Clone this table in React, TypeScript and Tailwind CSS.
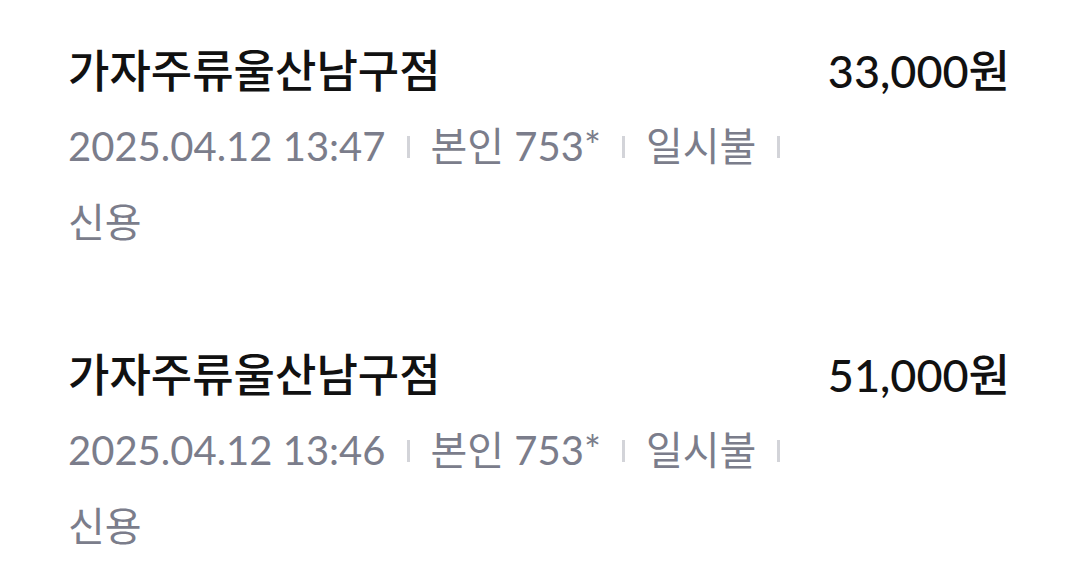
import React from "react";

const items = [
  { date: "2025.04.12 13:47", price: "33,000원" },
  { date: "2025.04.12 13:46", price: "51,000원" },
];

function Sep() {
  return <span className="mx-[21px] inline-block h-[22px] w-[3px] bg-[#d3d4d9]" />;
}

export default function App() {
  return (
    <div
      className="min-h-screen w-full bg-white pt-[45px] pl-[68px] pr-[70px]"
      style={{ fontFamily: "Lato, 'Noto Sans CJK KR', sans-serif" }}
    >
      {items.map((it, i) => (
        <div key={i} className={i > 0 ? "mt-[90px]" : ""}>
          <div className="flex items-center justify-between gap-6">
            <div className="text-[45px] leading-[52px] font-medium text-[#111111]">가자주류울산남구점</div>
            <div className="text-[45px] leading-[52px] font-medium text-[#111111]">{it.price}</div>
          </div>
          <div className="mt-[13px] flex max-w-[740px] flex-wrap items-center gap-y-[3px] text-[40px] leading-[73px] text-[#7b7d8b]">
            <span>{it.date}</span>
            <Sep />
            <span>본인 753*</span>
            <Sep />
            <span>일시불</span>
            <Sep />
            <span>신용</span>
          </div>
        </div>
      ))}
    </div>
  );
}
